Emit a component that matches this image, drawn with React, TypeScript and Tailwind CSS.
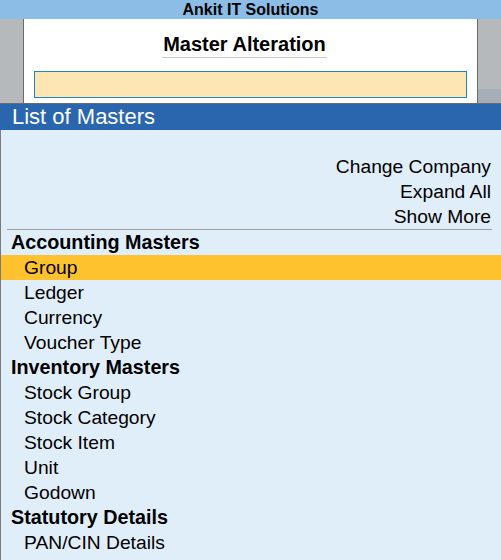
import React from "react";

const font = { fontFamily: '"Liberation Sans", Arial, sans-serif' };

type Row = { label: string; kind: "head" | "item"; active?: boolean };

const rows: Row[] = [
  { label: "Accounting Masters", kind: "head" },
  { label: "Group", kind: "item", active: true },
  { label: "Ledger", kind: "item" },
  { label: "Currency", kind: "item" },
  { label: "Voucher Type", kind: "item" },
  { label: "Inventory Masters", kind: "head" },
  { label: "Stock Group", kind: "item" },
  { label: "Stock Category", kind: "item" },
  { label: "Stock Item", kind: "item" },
  { label: "Unit", kind: "item" },
  { label: "Godown", kind: "item" },
  { label: "Statutory Details", kind: "head" },
  { label: "PAN/CIN Details", kind: "item" },
];

export default function App() {
  return (
    <div className="w-[501px] h-[560px] overflow-hidden bg-[#e0eefa] text-black" style={font}>
      <div className="h-[19px] bg-[#8bbde6] flex items-center justify-center text-[16px] font-bold leading-none">
        Ankit IT Solutions
      </div>
      <div className="flex h-[84px]">
        <div className="w-[23px] bg-[#b5b9bc]" />
        <div className="flex-1 bg-white border-x border-[#6b6b6b] flex flex-col items-center">
          <div className="mt-[13px] mr-[12px] text-[20px] font-bold leading-[24px] border-b border-[#c8c8c8] pb-[1px] px-[1px]">
            Master Alteration
          </div>
          <div className="mt-[13px] w-[433px] h-[27px] bg-[#fde6b4] border border-[#1d87c6]" />
        </div>
        <div className="w-[23px] flex flex-col">
          <div className="flex-1 bg-[#b5b9bc]" />
          <div className="h-[14px] bg-[#a5aeb7]" />
        </div>
      </div>
      <div className="h-[1px] bg-[#6b6b6b]" />
      <div className="h-[26px] bg-[#2a66ae] text-white text-[22px] leading-[26px] pl-[12px]">
        List of Masters
      </div>
      <div className="border-l border-[#7b7b7b] h-[430px]">
        <div className="h-[24px]" />
        <div className="flex flex-col items-end pr-[10px] text-[19.25px] leading-[25px]">
          <div>Change Company</div>
          <div>Expand All</div>
          <div>Show More</div>
        </div>
        <div className="ml-[6px] mr-[9px] h-[1px] bg-[#a0a0a0]" />
        <div className="flex flex-col">
          {rows.map((r) =>
            r.kind === "head" ? (
              <div key={r.label} className="h-[25px] leading-[25px] pl-[10px] text-[19.75px] font-bold">
                {r.label}
              </div>
            ) : (
              <div
                key={r.label}
                className={
                  r.active
                    ? "h-[25px] leading-[25px] pl-[23px] text-[19.25px] bg-[#fec22e]"
                    : "h-[25px] leading-[25px] pl-[23px] text-[19.25px]"
                }
              >
                {r.label}
              </div>
            )
          )}
        </div>
      </div>
    </div>
  );
}
